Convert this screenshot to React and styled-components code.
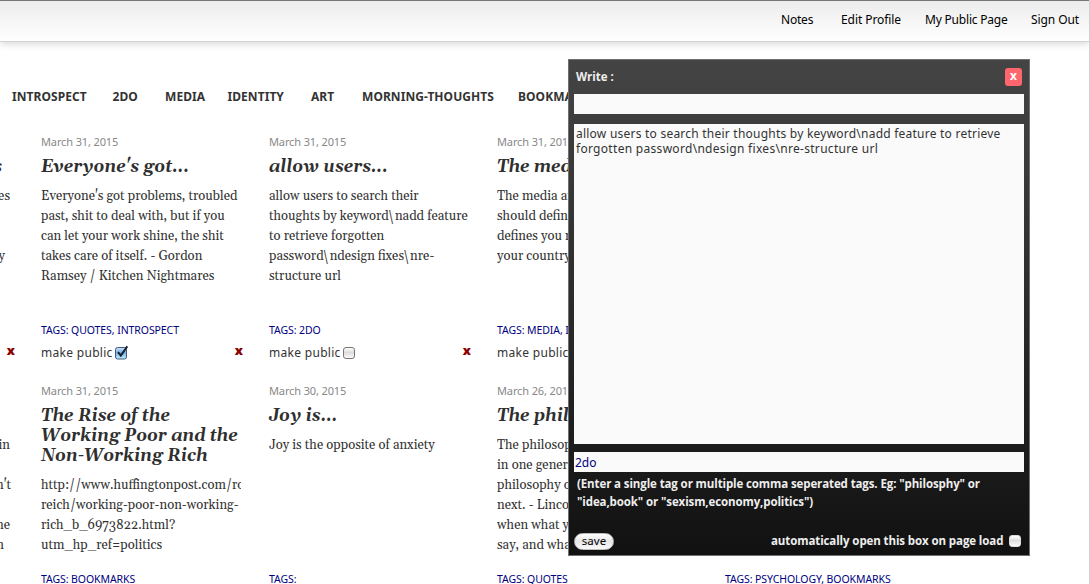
import React from 'react';
import styled, { createGlobalStyle } from 'styled-components';

const sans = '"Noto Sans", "Open Sans", sans-serif';
const semi = '"Open Sans", "Noto Sans", sans-serif';
const serif = 'Gelasio, "DejaVu Serif Condensed", "Liberation Serif", serif';

const GlobalStyle = createGlobalStyle`
  * { box-sizing: border-box; }
  body { margin: 0; background: #fff; color: #333; font-family: ${sans}; overflow: hidden; }
`;

const Page = styled.div`
  position: relative;
  width: 1090px;
  height: 584px;
  overflow: hidden;
  border-right: 1px solid #d0d0d0;
`;

const Header = styled.header`
  display: flex;
  justify-content: flex-end;
  height: 42px;
  padding: 8px 10px 0 0;
  border-top: 1px solid #77757a;
  border-bottom: 1px solid #d4d4d4;
  background: linear-gradient(#ececec, #fff);
  box-shadow: 0 2px 7px rgba(0, 0, 0, 0.16);
`;

const HeaderLink = styled.a`
  width: ${p => p.$w}px;
  margin-left: ${p => p.$gap || 0}px;
  font-size: 12px;
  line-height: 22px;
  letter-spacing: ${p => p.$ls}px;
  color: #000;
  white-space: nowrap;
`;

const TagNav = styled.nav`
  display: flex;
  height: 20px;
  margin-top: 45px;
  padding-left: 12px;
`;

const TagLink = styled.a`
  flex: none;
  width: ${p => p.$w}px;
  font: 700 12px/20px ${sans};
  letter-spacing: ${p => p.$ls}px;
  color: #333;
  white-space: nowrap;
`;

const Grid = styled.main`
  display: grid;
  grid-template-columns: 41px repeat(4, 228px);
  grid-auto-rows: 249px;
  margin-top: 25px;
`;

const Card = styled.article`
  display: flex;
  flex-direction: column;
  width: 202px;
  height: 230px;
`;

const CutCard = styled(Card)`
  width: 15px;
`;

const DateLine = styled.time`
  flex: none;
  height: 25px;
  font-size: 11px;
  line-height: 20px;
  letter-spacing: -0.13px;
  color: #888;
`;

const Title = styled.h2`
  margin: 0 0 9px;
  min-height: 20px;
  font: italic bold 17px/20px ${serif};
  color: #2f2f2f;
  white-space: pre;
`;

const Body = styled.div`
  flex: 1;
  width: 200px;
  min-height: 0;
  overflow: hidden;
  font: 13px/20px ${serif};
  color: #333;
  white-space: pre;
`;

const CutLine = styled.div`
  display: flex;
  justify-content: flex-end;
  width: ${p => p.$end}px;
  height: 20px;
`;

const Tags = styled.div`
  flex: none;
  height: 22px;
  font-size: 10.5px;
  line-height: 20px;
  letter-spacing: -0.08px;
  color: #000080;
  white-space: nowrap;
`;

const PublicRow = styled.div`
  flex: none;
  display: flex;
  align-items: center;
  height: 20px;
  font-size: 12px;
  letter-spacing: 0.3px;
  white-space: nowrap;
`;

const PublicLabel = styled.span`
  width: 74px;
`;

const DeleteMark = styled.span`
  margin-left: auto;
  font: 800 13px/20px ${semi};
  letter-spacing: 0;
  color: #8b0000;
  transform: translateY(-2px);
`;

const Box = styled.span`
  width: 12px;
  height: 12px;
  margin-top: ${p => (p.$light ? 0 : 2)}px;
  margin-right: ${p => (p.$light ? 3 : 0)}px;
  border: 1px solid ${p => (p.$light ? '#ddd' : '#777')};
  border-radius: 3px;
  background: linear-gradient(#fff, #dcdcdc 45%, #fafafa);
`;

const CheckedIcon = styled.svg`
  flex: none;
  width: 14px;
  height: 15px;
`;

const Checked = () => (
  <CheckedIcon viewBox="0 0 14 15">
    <defs>
      <linearGradient id="blue" x1="0" y1="0" x2="0" y2="1">
        <stop offset="0" stopColor="#d4e6f7" />
        <stop offset="0.45" stopColor="#74aee4" />
        <stop offset="1" stopColor="#c4f0ff" />
      </linearGradient>
    </defs>
    <rect x="0.5" y="2.5" width="11" height="11.5" rx="2" fill="url(#blue)" stroke="#43597c" />
    <path d="M3 7.2 L5.8 10.5 L12.3 1.3" fill="none" stroke="#16202e" strokeWidth="2" />
  </CheckedIcon>
);

const Dialog = styled.section`
  position: absolute;
  left: 568px;
  top: 59px;
  display: flex;
  flex-direction: column;
  width: 462px;
  height: 497px;
  padding: 0 5px;
  border: 1px solid #707070;
  background: linear-gradient(#444, #111);
  color: #eee;
`;

const DialogHead = styled.div`
  display: flex;
  justify-content: space-between;
  align-items: center;
  height: 34px;
  padding: 0 2px;
  font: 700 11.5px/20px ${semi};
`;

const Close = styled.button`
  width: 17px;
  height: 18px;
  margin-top: -1px;
  padding: 0 0 2px;
  border: 0;
  border-radius: 3px;
  background: #ff666e;
  color: #fff;
  font: 700 12px/16px ${semi};
`;

const Field = styled.div`
  flex: none;
  height: ${p => p.$h}px;
  margin-bottom: ${p => p.$mb}px;
  padding: ${p => p.$pad || '0'};
  background: #fafafa;
  font-size: 12px;
  line-height: ${p => p.$lh || 15}px;
  color: ${p => p.$color || '#333'};
  white-space: pre;
`;

const NoteLine = styled.div`
  letter-spacing: ${p => p.$ls}px;
`;

const Hint = styled.div`
  height: 59px;
  padding: 3px 3px 0;
  font: 700 11.5px/18px ${semi};
  letter-spacing: -0.11px;
  white-space: pre;
`;

const DialogFoot = styled.div`
  display: flex;
  align-items: center;
  height: 20px;
  font: 700 11.5px/20px ${semi};
  letter-spacing: -0.1px;
  white-space: nowrap;
`;

const Save = styled.button`
  width: 40px;
  height: 17px;
  padding: 0 0 1px;
  border: 1px solid #bbb;
  border-radius: 9px;
  background: linear-gradient(#fff, #e6e6e6 50%, #fafafa);
  color: #000;
  font: 11.5px/14px ${sans};
`;

const AutoLabel = styled.span`
  width: 238px;
  margin-left: auto;
`;

const cards = [
  { date: 'March 31, 2015', title: "Everyone's got...", tags: 'QUOTES, INTROSPECT', checked: true,
    body: "Everyone's got problems, troubled\npast, shit to deal with, but if you\ncan let your work shine, the shit\ntakes care of itself. - Gordon\nRamsey / Kitchen Nightmares" },
  { date: 'March 31, 2015', title: 'allow users...', tags: '2DO',
    body: 'allow users to search their\nthoughts by keyword\\nadd feature\nto retrieve forgotten\npassword\\ndesign fixes\\nre-\nstructure url' },
  { date: 'March 31, 2015', title: 'The media', tags: 'MEDIA, IDENTITY',
    body: 'The media and art\nshould define what\ndefines you not\nyour country' },
  null,
  { date: 'March 31, 2015', title: 'The Rise of the\nWorking Poor and the\nNon-Working Rich', tags: 'BOOKMARKS',
    body: 'http://www.huffingtonpost.com/robert-\nreich/working-poor-non-working-\nrich_b_6973822.html?\nutm_hp_ref=politics' },
  { date: 'March 30, 2015', title: 'Joy is...', tags: '', body: 'Joy is the opposite of anxiety' },
  { date: 'March 26, 2015', title: 'The philo', tags: 'QUOTES',
    body: 'The philosophy\nin one generation\nphilosophy of\nnext. - Lincoln\nwhen what you\nsay, and what' },
  { date: '', title: '', tags: 'PSYCHOLOGY, BOOKMARKS', body: '' },
];

const cut = [
  { title: 's', lines: [['es', 10], ['', 0], ['', 0], ['y', 5]] },
  { title: '', lines: [['in', 10], ['', 0], ["n't", 11], ['', 0], ['he', 10], ['n', 4]] },
];

const nav = [
  ['INTROSPECT', 100.5], ['2DO', 52.5], ['MEDIA', 62.5], ['IDENTITY', 83.5], ['ART', 51], ['MORNING-THOUGHTS', 156], ['BOOKMARKS', 90],
];

function Note({ note }) {
  if (!note) return <Card />;
  return (
    <Card>
      <DateLine>{note.date}</DateLine>
      <Title>{note.title}</Title>
      <Body>{note.body}</Body>
      <Tags>TAGS: {note.tags}</Tags>
      {note.date && (
        <PublicRow>
          <PublicLabel>make public</PublicLabel>
          {note.checked ? <Checked /> : <Box />}
          <DeleteMark>x</DeleteMark>
        </PublicRow>
      )}
      {!note.date && <PublicRow />}
    </Card>
  );
}

function CutNote({ note }) {
  return (
    <CutCard>
      <DateLine />
      <Title><CutLine $end={2}>{note.title}</CutLine></Title>
      <Body>{note.lines.map(([t, end], i) => <CutLine key={i} $end={end}>{t}</CutLine>)}</Body>
      <Tags />
      <PublicRow><DeleteMark>x</DeleteMark></PublicRow>
    </CutCard>
  );
}

export default function App() {
  return (
    <Page>
      <GlobalStyle />
      <Header>
        <HeaderLink $w={32} $ls={-0.2}>Notes</HeaderLink>
        <HeaderLink $w={60} $gap={28} $ls={-0.08}>Edit Profile</HeaderLink>
        <HeaderLink $w={82} $gap={24} $ls={-0.2}>My Public Page</HeaderLink>
        <HeaderLink $w={48} $gap={24} $ls={-0.08}>Sign Out</HeaderLink>
      </Header>
      <TagNav>
        {nav.map(([t, w]) => <TagLink key={t} $w={w} $ls={0.06}>{t}</TagLink>)}
      </TagNav>
      <Grid>
        <CutNote note={cut[0]} />
        {cards.slice(0, 4).map((c, i) => <Note key={i} note={c} />)}
        <CutNote note={cut[1]} />
        {cards.slice(4).map((c, i) => <Note key={i} note={c} />)}
      </Grid>
      <Dialog>
        <DialogHead><span>Write :</span><Close>x</Close></DialogHead>
        <Field $h={20} $mb={10} />
        <Field $h={320} $mb={8} $pad="2px 2px">
          <NoteLine $ls={0.23}>{'allow users to search their thoughts by keyword\\nadd feature to retrieve'}</NoteLine>
          <NoteLine $ls={0.3}>{'forgotten password\\ndesign fixes\\nre-structure url'}</NoteLine>
        </Field>
        <Field $h={20} $mb={0} $pad="0 1px" $lh={21} $color="#000080">2do</Field>
        <Hint>{'(Enter a single tag or multiple comma seperated tags. Eg: "philosphy" or\n"idea,book" or "sexism,economy,politics")'}</Hint>
        <DialogFoot>
          <Save>save</Save>
          <AutoLabel>automatically open this box on page load</AutoLabel>
          <Box $light />
        </DialogFoot>
      </Dialog>
    </Page>
  );
}
